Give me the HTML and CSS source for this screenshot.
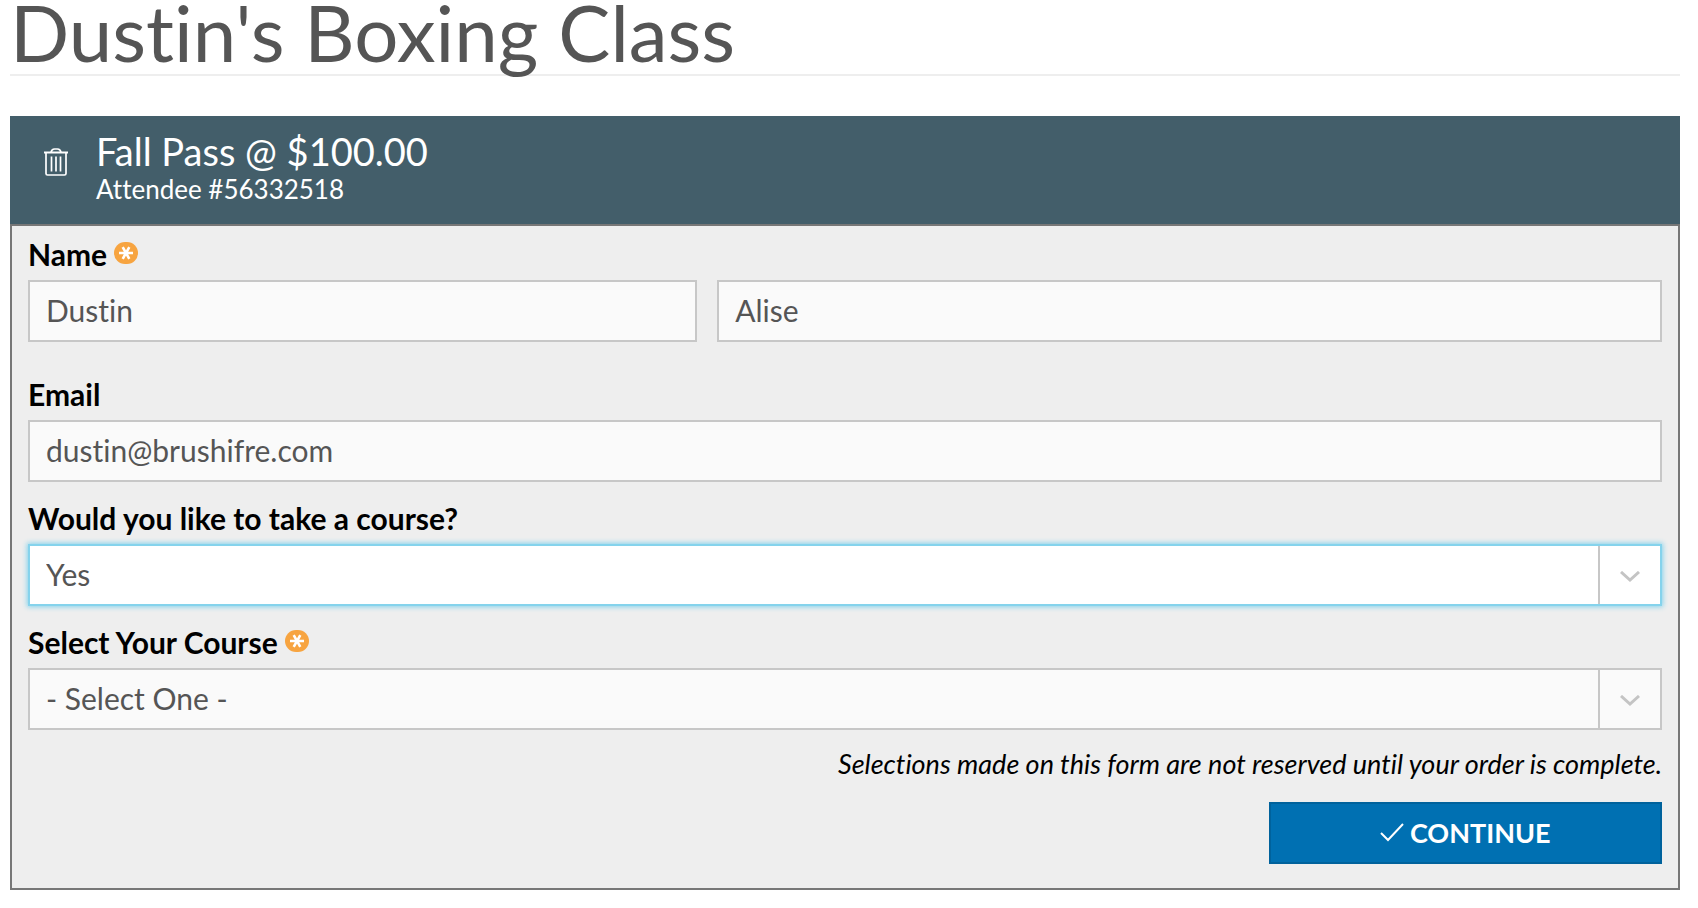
FILE: index.html
```html
<!DOCTYPE html>
<html lang="en">
<head>
<meta charset="utf-8">
<title>Dustin's Boxing Class</title>
<link rel="stylesheet" href="styles.css">
</head>
<body>
<main class="page">
  <h1 class="page-title">Dustin's Boxing Class</h1>
  <form class="attendee">
    <header class="attendee-header">
      <button class="remove" type="button" aria-label="Remove attendee">
        <svg width="24" height="28" viewBox="0 0 24 28" fill="none" stroke="currentColor">
          <path d="M0 4.500h24" stroke-width="2"/>
          <path d="M7 4.500C7.500 2 8.500 1 10.500 1h3C15.500 1 16.500 2 17 4.500" stroke-width="1.700"/>
          <path d="M2 5v20.500q0 1.500 1.500 1.500h17q1.500 0 1.500-1.500V5" stroke-width="1.700"/>
          <path d="M7.500 8.500v15M12 8.500v15M16.500 8.500v15" stroke-width="1.700"/>
        </svg>
      </button>
      <div>
        <h2 class="pass-name">Fall Pass @ $100.00</h2>
        <p class="attendee-id">Attendee #56332518</p>
      </div>
    </header>
    <div class="attendee-body">
      <div class="field field-name">
        <label class="label" for="first-name">Name
          <svg class="required" width="24" height="22" viewBox="0 0 24 22" aria-hidden="true"><rect width="24" height="22" rx="11"/><path d="M5 11h14M8.700 5.200l6.600 11.600M15.300 5.200l-6.600 11.600"/></svg></label>
        <div class="name-row">
          <input class="control first" id="first-name" type="text" value="Dustin">
          <input class="control last" type="text" value="Alise" aria-label="Last name">
        </div>
      </div>
      <div class="field">
        <label class="label" for="email">Email</label>
        <input class="control" id="email" type="email" value="dustin@brushifre.com">
      </div>
      <div class="field">
        <label class="label" for="take-course">Would you like to take a course?</label>
        <div class="select">
          <select class="control active" id="take-course"><option>Yes</option><option>No</option></select>
          <span class="select-arrow"><svg width="20" height="11" viewBox="0 0 20 11"><path d="M1 1l9 8 9-8"/></svg></span>
        </div>
      </div>
      <div class="field">
        <label class="label" for="course">Select Your Course
          <svg class="required" width="24" height="22" viewBox="0 0 24 22" aria-hidden="true"><rect width="24" height="22" rx="11"/><path d="M5 11h14M8.700 5.200l6.600 11.600M15.300 5.200l-6.600 11.600"/></svg></label>
        <div class="select">
          <select class="control" id="course"><option>- Select One -</option></select>
          <span class="select-arrow"><svg width="20" height="11" viewBox="0 0 20 11"><path d="M1 1l9 8 9-8"/></svg></span>
        </div>
      </div>
      <p class="note">Selections made on this form are not reserved until your order is complete.</p>
      <button class="continue" type="button">
        <svg width="24" height="20" viewBox="0 0 24 20"><path d="M1 11l7 7L23 2"/></svg>
        CONTINUE
      </button>
    </div>
  </form>
</main>
</body>
</html>
```

FILE: styles.css
```css
* {
  box-sizing: border-box;
}

body {
  margin: 0;
  background: #fff;
  color: #000;
  font-family: Lato, "Liberation Sans", sans-serif;
  font-variant-ligatures: none;
}

h1, h2, p {
  margin: 0;
  font-weight: 400;
}

.page {
  padding: 0 18px 0 10px;
}

.page-title {
  margin-bottom: 40px;
  padding-bottom: 10px;
  border-bottom: 2px solid #eee;
  color: #555;
  font-size: 78px;
  line-height: 64px;
}

.attendee-header {
  display: flex;
  gap: 28px;
  padding: 14px 34px 18px;
  background: #435e6a;
  color: #fff;
}

.remove {
  display: flex;
  align-self: flex-start;
  margin-top: 18px;
  padding: 0;
  border: 0;
  background: none;
  color: inherit;
}

.pass-name {
  font-size: 38px;
  line-height: 42px;
}

.attendee-id {
  font-size: 26px;
  line-height: 34px;
}

.attendee-body {
  padding: 8px 16px 24px;
  border: 2px solid #777;
  background: #eee;
}

.field {
  margin-bottom: 16px;
}

.field-name {
  margin-bottom: 32px;
}

.label {
  display: block;
  margin-bottom: 6px;
  font-size: 30px;
  font-weight: 700;
  line-height: 40px;
}

.required {
  vertical-align: 2px;
  fill: #f7a440;
}

.required path {
  fill: none;
  stroke: #fff;
  stroke-width: 2.6;
}

.name-row {
  display: grid;
  grid-template-columns: repeat(12, 1fr);
  gap: 20px;
}

.first {
  grid-column: span 5;
}

.last {
  grid-column: span 7;
}

.control {
  display: block;
  width: 100%;
  height: 62px;
  padding: 0 16px 2px;
  border: 2px solid #c7c7c7;
  border-radius: 0;
  outline: 0;
  background: #fafafa;
  color: #555;
  font: 30px Lato, "Liberation Sans", sans-serif;
  font-variant-ligatures: none;
  appearance: none;
}

.control.active {
  border-color: #85d3ec;
  background: #fff;
  box-shadow: 0 0 5px 1px #85d3ec;
}

.select {
  position: relative;
}

.select-arrow {
  position: absolute;
  top: 2px;
  right: 2px;
  bottom: 2px;
  display: flex;
  align-items: center;
  justify-content: center;
  width: 62px;
  padding-top: 3px;
  border-left: 2px solid #c7c7c7;
  pointer-events: none;
}

.select-arrow path {
  fill: none;
  stroke: #c4c4c4;
  stroke-width: 3;
}

.note {
  margin-bottom: 20px;
  font-size: 27px;
  font-style: italic;
  line-height: 36px;
  text-align: right;
}

.continue {
  display: flex;
  align-items: center;
  justify-content: center;
  gap: 6px;
  width: calc((100% - 60px) / 4);
  height: 62px;
  margin-left: auto;
  padding: 0 6px 2px;
  border: 2px solid #00629c;
  background: #0070b2;
  color: #fff;
  font: 700 27px Lato, "Liberation Sans", sans-serif;
}

.continue path {
  fill: none;
  stroke: #fff;
  stroke-width: 2;
}
```
